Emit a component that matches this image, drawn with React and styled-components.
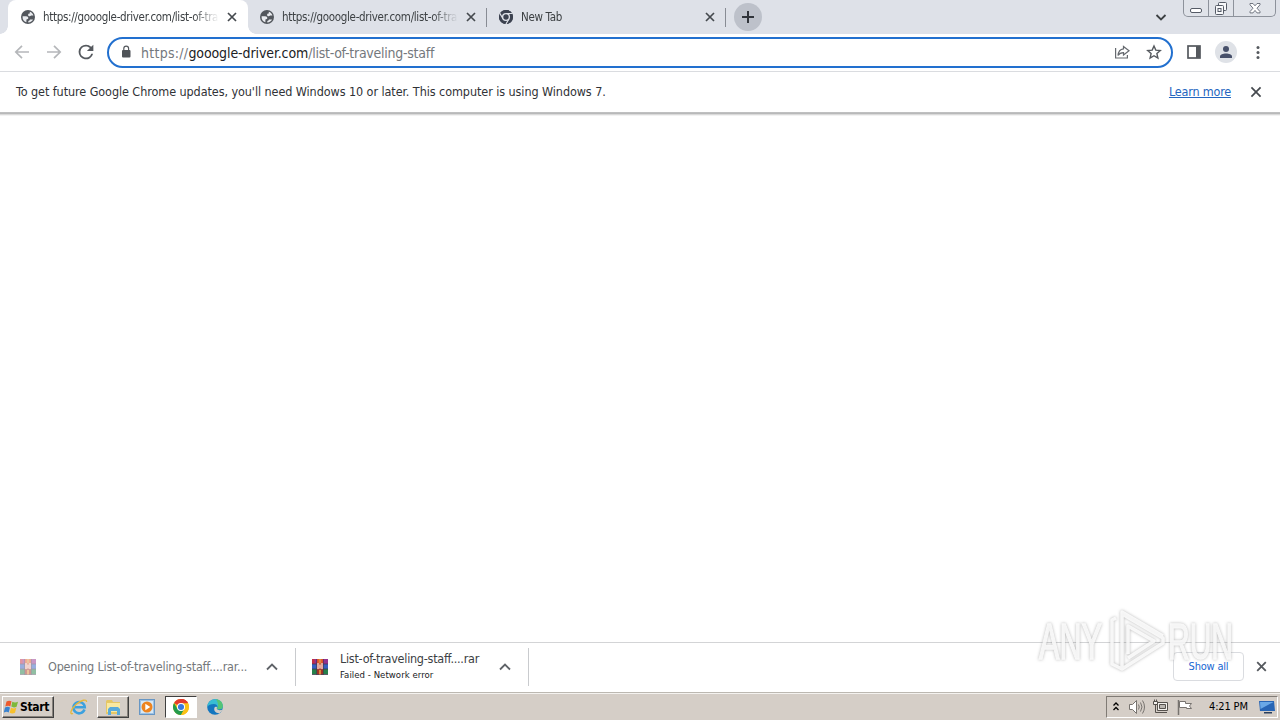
import styled, { createGlobalStyle, css } from "styled-components";

const GlobalStyle = createGlobalStyle`
    * {
        box-sizing: border-box;
    }

    body {
        margin: 0;
        overflow: hidden;
        font-family: "DejaVu Sans Condensed", "DejaVu Sans", sans-serif;
        font-stretch: condensed;
        background: #ffffff;
    }

    svg {
        display: block;
        flex: none;
    }
`

const Screen = styled.div`
    position: relative;
    width: 1280px;
    height: 720px;
    display: flex;
    flex-direction: column;
    overflow: hidden;
    background: #ffffff;
`

const Text = styled.span`
    display: block;
    flex: none;
    white-space: pre;
    font-size: ${p => p.$size || 12}px;
    line-height: 16px;
    letter-spacing: ${p => p.$spacing || 0}px;
    color: ${p => p.$color || "#3c4043"};
`

const TabStrip = styled.div`
    height: 34px;
    flex: none;
    display: flex;
    padding-left: 8px;
    background: #dee1e8;
`

const TabItem = styled.div`
    position: relative;
    width: ${p => p.$width}px;
    height: 34px;
    display: flex;
    align-items: center;
    padding-left: ${p => p.$active ? 13 : 12}px;

    .title {
        width: 180px;
        margin-left: 8px;
        overflow: hidden;
        mask-image: linear-gradient(to right, #000 150px, transparent 176px);
    }

    .close {
        margin-left: 2px;
    }

    ${p => p.$active && css`
        background: #ffffff;
        border-radius: 8px 8px 0 0;
        z-index: 1;

        &::before, &::after {
            content: "";
            position: absolute;
            bottom: 0;
            width: 8px;
            height: 8px;
        }
        &::before {
            left: -8px;
            background: radial-gradient(circle at 0 0, transparent 7.5px, #ffffff 8px);
        }
        &::after {
            right: -8px;
            background: radial-gradient(circle at 100% 0, transparent 7.5px, #ffffff 8px);
        }
    `}
    ${p => p.$divided && css`
        &::after {
            content: "";
            position: absolute;
            right: 0;
            top: 8px;
            width: 1px;
            height: 19px;
            background: #888c94;
        }
    `}
`

const NewTabButton = styled.div`
    width: 28px;
    height: 28px;
    margin: 3px 0 0 8px;
    border-radius: 50%;
    background: #bdc1ca;
`

const StripEnd = styled.div`
    margin-left: auto;
    display: flex;
    padding-right: 4px;

    .search {
        margin: 10px 15px 0 0;
    }
`

const WindowControls = styled.div`
    display: flex;
    height: 17px;
    border: 1px solid #8d929b;
    border-top: none;
    border-radius: 0 0 5px 5px;
    background: #e0e3e9;
`

const WindowButton = styled.div`
    width: ${p => p.$width}px;
    display: flex;
    justify-content: center;

    & + & {
        border-left: 1px solid #8d929b;
    }
`

const Toolbar = styled.div`
    height: 38px;
    flex: none;
    display: flex;
    align-items: center;
    padding: 0 14px 1px 14px;
    border-bottom: 1px solid #dadce0;
    background: #ffffff;

    .nav {
        display: flex;
        gap: 16px;
    }
`

const Omnibox = styled.div`
    width: 1066px;
    height: 31px;
    margin: 0 13px;
    padding: 0 9px 0 11px;
    display: flex;
    align-items: center;
    border: 2px solid #2270cf;
    border-radius: 16px;

    .url {
        display: flex;
        margin-left: 9px;
        margin-right: auto;
        padding-top: 1px;
    }

    .share {
        margin-right: 16px;
    }
`

const ToolbarActions = styled.div`
    display: flex;
    align-items: center;
    gap: 13px;
`

const Avatar = styled.div`
    width: 22px;
    height: 22px;
    border-radius: 50%;
    background: #dfe2e7;
    display: flex;
    align-items: center;
    justify-content: center;
`

const InfoBar = styled.div`
    height: 44px;
    flex: none;
    display: flex;
    align-items: center;
    padding: 0 16px 4px 16px;
    background: linear-gradient(to bottom, #ffffff 40px, #d5d5d5 40px, #a9aaab 41px, #c8c8c8 42px, #ececec 43px, #f8f8f8 44px);

    .link {
        margin-left: auto;
        margin-right: 17px;
        text-decoration: underline;
    }
`

const Page = styled.main`
    flex: 1;
    background: #ffffff;
`

const DownloadShelf = styled.div`
    height: 50px;
    flex: none;
    display: flex;
    align-items: center;
    border-top: 1px solid #d3d4d6;
    background: #ffffff;
    padding: 0 11px 2px 0;
`

const DownloadItem = styled.div`
    width: ${p => p.$width}px;
    height: 38px;
    display: flex;
    align-items: center;
    padding-left: ${p => p.$pad}px;
    border-right: 1px solid #c9cbce;

    .archive {
        opacity: ${p => p.$faded ? 0.5 : 1};
    }

    .info {
        width: ${p => p.$info}px;
        margin-left: 12px;
    }

    .chevron {
        margin-left: 11px;
    }
`

const ShowAllButton = styled.div`
    width: 71px;
    height: 29px;
    margin: 0 10px 0 auto;
    display: flex;
    align-items: center;
    justify-content: center;
    border: 1px solid #dadce0;
    border-radius: 4px;
`

const Taskbar = styled.div`
    height: 28px;
    flex: none;
    display: flex;
    align-items: center;
    padding: 2px 2px 2px;
    border-top: 1px solid #bcb8b1;
    box-shadow: inset 0 1px 0 #f4f2ef;
    background: #d5cec7;
`

const StartButton = styled.div`
    width: 52px;
    height: 22px;
    display: flex;
    align-items: center;
    padding-left: 1px;
    border: 1px solid;
    border-color: #ffffff #404040 #404040 #ffffff;
    box-shadow: inset -1px -1px 0 #87827c;

    span {
        font: bold 12px/18px "DejaVu Sans Condensed", sans-serif;
        letter-spacing: -0.3px;
        color: #000000;
    }
`

const TaskButton = styled.div`
    width: 32px;
    height: 22px;
    margin-right: 2px;
    display: flex;
    align-items: center;
    justify-content: center;

    ${p => p.$first && css`
        margin-left: 9px;
    `}
    ${p => p.$raised && css`
        border: 1px solid;
        border-color: #ffffff #404040 #404040 #ffffff;
        box-shadow: inset -1px -1px 0 #87827c;
    `}
    ${p => p.$pressed && css`
        border: 1px solid;
        border-color: #404040 #ffffff #ffffff #404040;
        background: #ffffff;
    `}
`

const Tray = styled.div`
    width: 172px;
    height: 22px;
    margin-left: auto;
    display: flex;
    align-items: center;
    padding-left: 4px;
    border: 1px solid;
    border-color: #807b75 #ffffff #ffffff #807b75;

    .status {
        display: flex;
        gap: 6px;
        margin-left: 7px;
    }

    .clock {
        margin: 0 11px 0 15px;
    }
`

const Watermark = styled.div`
    position: absolute;
    left: 1030px;
    top: 602px;
    z-index: 5;
    filter: drop-shadow(0 0 1.5px rgba(90, 90, 90, 0.5));
`

const CloseIcon = ({ size = 14, color = "#45494e", width = 1.7, className }) => (
    <svg className={className} width={size} height={size} viewBox="0 0 14 14" stroke={color} strokeWidth={width}>
        <path d="M3 3l8 8M11 3l-8 8" />
    </svg>
)

const GlobeIcon = () => (
    <svg width="14" height="14" viewBox="0 0 14 14">
        <circle cx="7" cy="7" r="7" fill="#53575d" />
        <path d="M1.600 6.200h3.500c1.500 0 2.200.7 2.200 1.900 0 1-.8 1.300-1.900 1.300v2.900C3 11.600 1.200 9.500 1.600 6.200z" fill="#e9ebef" />
        <path d="M12.400 5.500h-2.300c-.8 1.100-3 .9-3-.5 0-1.100.6-1.500 1.700-1.500V1.700c1.900.6 3.200 2 3.600 3.800z" fill="#e9ebef" />
        <path d="M7.300 12.500v-1.600c1 0 1.600-.5 1.600-1.400h3.100c-.8 1.700-2.500 2.900-4.700 3z" fill="#e9ebef" />
    </svg>
)

const ChromeMark = ({ size, colors, center, gap }) => (
    <svg width={size} height={size} viewBox="0 0 24 24">
        <circle cx="12" cy="12" r="12" fill={colors[2]} />
        <path d="M12 12L1.600 6A12 12 0 0 1 22.400 6z" fill={colors[0]} />
        <path d="M12 12V0A12 12 0 0 1 22.400 6z" fill={colors[0]} />
        <path d="M1.600 6A12 12 0 0 0 12 24l5.200-9L12 12 6.800 15z" fill={colors[1]} />
        <path d="M12 6.500h10.700A12 12 0 0 1 12 24l5-9z" fill={colors[2]} />
        {gap && <path d="M12 6h11M6.800 15L1.500 5.800M17.200 15L12 24" stroke={gap} strokeWidth="2" />}
        <circle cx="12" cy="12" r={gap ? 7 : 6} fill={gap || "#ffffff"} />
        <circle cx="12" cy="12" r="4.600" fill={center} />
    </svg>
)

const ArchiveIcon = () => (
    <svg className="archive" width="16" height="16" viewBox="0 0 16 16">
        <path fill="#94318f" d="M0 0h16v5H0z" />
        <path fill="#c22d45" d="M0 0h2.500v5H0z" />
        <path fill="#355fc0" d="M0 5h16v5H0z" />
        <path fill="#25804a" d="M0 10h16v5.500H0z" />
        <path fill="#ea5a2a" d="M5 0h6v5H5z" />
        <path fill="#a83224" d="M5 10h6v5.500H5z" />
        <path d="M0 5h16M0 10h16M0 15.500h16M4.700 0v16M11.300 0v16" stroke="#43304a" strokeWidth=".7" />
        <path fill="#d98a3c" d="M7 0h2v5H7zM7 11h2v4.500H7z" />
        <path d="M5 4.500h6v6H5z" fill="#c24d3a" />
        <path d="M6 4v6M10 4v6M8 5.500v4" stroke="#fff4ef" strokeWidth="1.100" fill="none" />
    </svg>
)

const Chevron = ({ className, down }) => (
    <svg className={className} width="14" height="14" viewBox="0 0 14 14" fill="none" stroke={down ? "#3c4043" : "#5f6368"} strokeWidth="1.800">
        <path d={down ? "M2.500 5L7 9.500 11.500 5" : "M2 9.500l5-5 5 5"} />
    </svg>
)

const ArrowIcon = ({ flip }) => (
    <svg width="16" height="16" viewBox="0 0 16 16" fill="none" stroke="#b5b7ba" strokeWidth="1.700">
        <path d={flip ? "M1 8h13M8 1.800L14.200 8 8 14.200" : "M15 8H2M8 1.800L1.800 8 8 14.200"} />
    </svg>
)

const Tab = ({ title, width, active, divided, chrome }) => (
    <TabItem $width={width} $active={active} $divided={divided}>
        {chrome ? <ChromeMark size={14} colors={["#3c4250", "#3c4250", "#3c4250"]} center="#3c4250" gap="#dee1e8" /> : <GlobeIcon />}
        <Text className="title" $size={11.5} $spacing={-0.32}>{title}</Text>
        <CloseIcon className="close" />
    </TabItem>
)

const App = () => {
    return (
        <Screen>
            <GlobalStyle />
            <TabStrip>
                <Tab title="https://gooogle-driver.com/list-of-traveling-staff" width={240} active />
                <Tab title="https://gooogle-driver.com/list-of-traveling-staff" width={239} divided />
                <Tab title="New Tab" width={239} divided chrome />
                <NewTabButton>
                    <svg width="28" height="28" viewBox="0 0 28 28" stroke="#30343a" strokeWidth="2">
                        <path d="M14 8v12M8 14h12" />
                    </svg>
                </NewTabButton>
                <StripEnd>
                    <Chevron className="search" down />
                    <WindowControls>
                        <WindowButton $width={24}>
                            <svg width="14" height="16" viewBox="0 0 14 16" fill="#fff" stroke="#555b66">
                                <rect x="1.500" y="8.500" width="11" height="4" rx="1.500" />
                            </svg>
                        </WindowButton>
                        <WindowButton $width={25}>
                            <svg width="14" height="16" viewBox="0 0 14 16" fill="#f7f8fa" stroke="#555b66">
                                <rect x="4.500" y="2.500" width="8" height="8" rx="1" />
                                <rect x="1.500" y="5.500" width="8" height="9" rx="1" />
                                <rect x="4" y="8.500" width="3" height="3" />
                            </svg>
                        </WindowButton>
                        <WindowButton $width={42}>
                            <svg width="14" height="16" viewBox="0 0 14 16" fill="#fff" stroke="#636975" strokeWidth=".9">
                                <path d="M2 3.500h3l2 2.300 2-2.300h3v1.300L9 8.200l3 3.400v1.300H9l-2-2.500-2 2.500H2v-1.300l3-3.400-3-3.400z" />
                            </svg>
                        </WindowButton>
                    </WindowControls>
                </StripEnd>
            </TabStrip>

            <Toolbar>
                <div className="nav">
                    <ArrowIcon />
                    <ArrowIcon flip />
                    <svg width="16" height="16" viewBox="3.300 3.300 17.400 17.400" fill="#55595e">
                        <path d="M17.650 6.350A7.960 7.960 0 0 0 12 4a8 8 0 1 0 7.730 10h-2.080A6 6 0 1 1 12 6c1.660 0 3.140.690 4.220 1.780L13 11h7V4l-2.350 2.350z" />
                    </svg>
                </div>
                <Omnibox>
                    <svg width="12" height="14" viewBox="0 0 12 14">
                        <path d="M3.800 6V3.600a2.400 2.400 0 0 1 4.800 0V6" fill="none" stroke="#55595e" strokeWidth="1.200" />
                        <rect x="2" y="5" width="8.500" height="7.500" rx="1" fill="#4f5358" />
                    </svg>
                    <div className="url">
                        <Text $size={14} $spacing={0.28} $color="#74787d">https://</Text>
                        <Text $size={14} $spacing={-0.1} $color="#202124">gooogle-driver.com</Text>
                        <Text $size={14} $spacing={-0.26} $color="#74787d">/list-of-traveling-staff</Text>
                    </div>
                    <svg className="share" width="16" height="16" viewBox="0 0 16 16" fill="none" stroke="#666a6f" strokeWidth="1.200">
                        <path d="M1.600 4v10h11.800v-3" />
                        <path d="M9.500 2.500L15 6.800 9.500 11V8.700C7 8.700 5.300 9.500 4 11.500 4.300 8 6 5.200 9.500 4.800z" />
                    </svg>
                    <svg width="16" height="16" viewBox="0 0 16 16" fill="none" stroke="#55595e" strokeWidth="1.400">
                        <path d="M8 2l1.800 4.100 4.500.4-3.400 3.100 1 4.400L8 11.700 4.100 14l1-4.400-3.400-3.100 4.500-.4z" />
                    </svg>
                </Omnibox>
                <ToolbarActions>
                    <svg width="16" height="16" viewBox="0 0 16 16">
                        <rect x="2" y="2" width="12" height="12" fill="none" stroke="#55595e" strokeWidth="1.700" />
                        <path d="M10 2h4v12h-4z" fill="#55595e" />
                    </svg>
                    <Avatar>
                        <svg width="14" height="14" viewBox="0 0 14 14" fill="#47506a">
                            <circle cx="7" cy="4" r="3" />
                            <path d="M1 13v-1.500c0-2 3-3 6-3s6 1 6 3V13z" />
                        </svg>
                    </Avatar>
                    <svg width="16" height="16" viewBox="0 0 16 16" fill="#55595e">
                        <circle cx="8" cy="3.500" r="1.500" />
                        <circle cx="8" cy="8.500" r="1.500" />
                        <circle cx="8" cy="13.500" r="1.500" />
                    </svg>
                </ToolbarActions>
            </Toolbar>

            <InfoBar>
                <Text $size={12.5} $spacing={-0.075} $color="#303236">To get future Google Chrome updates, you'll need Windows 10 or later. This computer is using Windows 7.</Text>
                <Text className="link" $size={12.5} $spacing={-0.2} $color="#2465c0">Learn more</Text>
                <CloseIcon width={1.500} color="#45494e" size={16} />
            </InfoBar>

            <Page />

            <DownloadShelf>
                <DownloadItem $width={296} $pad={20} $faded $info={206}>
                    <ArchiveIcon />
                    <div className="info">
                        <Text $size={12.5} $spacing={-0.2} $color="#74777b">Opening List-of-traveling-staff....rar...</Text>
                    </div>
                    <Chevron className="chevron" />
                </DownloadItem>
                <DownloadItem $width={233} $pad={16} $info={147}>
                    <ArchiveIcon />
                    <div className="info">
                        <Text $size={12.5} $spacing={-0.26}>List-of-traveling-staff....rar</Text>
                        <Text $size={9.5} $spacing={0.05} $color="#202124">Failed - Network error</Text>
                    </div>
                    <Chevron className="chevron" />
                </DownloadItem>
                <ShowAllButton>
                    <Text $size={11} $spacing={-0.2} $color="#1967d2">Show all</Text>
                </ShowAllButton>
                <CloseIcon width={1.700} color="#55595e" size={15} />
            </DownloadShelf>

            <Taskbar>
                <StartButton>
                    <svg width="16" height="16" viewBox="0 0 16 16">
                        <path d="M2.500 2.500c2-1.200 3.500-1 5-.2L6.300 7.400c-1.600-.9-3-.9-5 .2z" fill="#ee5a2c" />
                        <path d="M8.300 2.700c2 1 3.500 1 5.700 0l-1.400 5c-2 1-3.500.9-5.300-.1z" fill="#7db83a" />
                        <path d="M1 8.500c2-1.200 3.500-1 5-.1l-1.300 5c-1.500-.9-3-1-5 .2z" fill="#3a83cf" />
                        <path d="M7 8.700c2 1 3.300 1 5.300.1l-1.300 5c-2 1-3.600.9-5.300 0z" fill="#f7c02c" />
                    </svg>
                    <span>Start</span>
                </StartButton>
                <TaskButton $first>
                    <svg width="18" height="18" viewBox="0 0 18 18" fill="none">
                        <path d="M14.500 11.500a5.700 5.700 0 1 1 .3-2.200H5" stroke="#3ca1df" strokeWidth="2.500" />
                        <path d="M3 15.500C-1 17 1 11 6 6.500S17 .5 16.500 4" stroke="#e6b83b" strokeWidth="1.300" />
                    </svg>
                </TaskButton>
                <TaskButton $raised>
                    <svg width="18" height="18" viewBox="0 0 18 18">
                        <path d="M2 3l1-1h5l1 2h7v12H2z" fill="#e5c765" />
                        <path d="M3 5h13v9H3z" fill="#f9e9a0" />
                        <path d="M4 17v-6l2-2h8l2 2v6h-3v-4H7v4z" fill="#58aada" />
                    </svg>
                </TaskButton>
                <TaskButton>
                    <svg width="16" height="16" viewBox="0 0 16 16">
                        <rect x=".5" y=".5" width="15" height="15" fill="#9dc2e5" stroke="#6796c4" />
                        <rect x="2" y="2" width="12" height="12" fill="#d7e8f5" />
                        <circle cx="8" cy="8" r="5.500" fill="#ed8420" />
                        <path d="M6.300 4.700v6.600L11.300 8z" fill="#fff" />
                    </svg>
                </TaskButton>
                <TaskButton $pressed>
                    <ChromeMark size={16} colors={["#e33b2e", "#249b4d", "#fbc116"]} center="#3979df" />
                </TaskButton>
                <TaskButton>
                    <svg width="16" height="16" viewBox="0 0 16 16">
                        <circle cx="8" cy="8" r="7.800" fill="#1476bf" />
                        <path d="M.3 8C.6-2.500 16-2.300 15.800 7.500c-.2 3.200-4.600 3.500-5.900 2 1.800-2.500-.5-4.500-3-4.500C4 5 1 6 .3 8z" fill="#38bdd3" />
                        <path d="M9 .3c5 .5 7 4 6.800 7.200-.2 3.200-4.600 3.500-5.900 2 2.600-3 .5-6.700-.9-9.200z" fill="#55c476" />
                        <path d="M9.700 9.600c1 2 4 2 5.800.8-.6 1.600-1.500 2.800-2.700 3.700C9 14.500 6.300 12 7.500 8.500c.5-1 2-.8 2.500-.3z" fill="#d5cec7" />
                    </svg>
                </TaskButton>
                <Tray>
                    <svg width="10" height="12" viewBox="0 0 10 12" fill="none" stroke="#000" strokeWidth="1.300">
                        <path d="M2.500 4.500L5 2l2.500 2.500M2.500 9L5 6.500 7.500 9" />
                    </svg>
                    <div className="status">
                        <svg width="18" height="18" viewBox="0 0 18 18" fill="#fff" stroke="#77736f">
                            <path d="M1.500 6.500h3l4-4v13l-4-4h-3z" />
                            <path d="M10.500 6.500q1.500 2.500 0 5M12.500 4.500q3 4.500 0 9M14.500 2.500q4 6.500 0 13" fill="none" />
                        </svg>
                        <svg width="18" height="18" viewBox="0 0 18 18" fill="#f3f1ee" stroke="#55514d">
                            <path d="M5.500 4.500h10v8h-10z" />
                            <path d="M7.500 6.500h6v4h-6z" fill="#bab6b1" />
                            <path d="M7 14.500h8M3.500 6.500v8h4" fill="none" />
                            <path d="M1.500 3.500h4v3h-4zM2.500 1.500v2M4.500 1.500v2" />
                        </svg>
                        <svg width="18" height="18" viewBox="0 0 18 18" fill="#fff" stroke="#77736f">
                            <path d="M2.500 2v15" strokeWidth="1.500" />
                            <path d="M3.500 3.500h6v2h6l-2 2.500 2 2.500h-5v-1h-7z" />
                        </svg>
                    </div>
                    <Text className="clock" $size={11} $spacing={-0.15} $color="#000000">4:21 PM</Text>
                    <svg width="16" height="16" viewBox="0 0 16 16">
                        <path d="M0 2h15l1 10H1z" fill="#2765b5" />
                        <path d="M1 3h13.500L1.500 10z" fill="#69a8e7" />
                        <path d="M5 13h8v1.500H5z" fill="#293f5e" />
                    </svg>
                </Tray>
            </Taskbar>

            <Watermark>
                <svg width="210" height="76" viewBox="0 0 210 76" opacity=".85">
                    <g fontFamily="Liberation Sans" fontSize="50" fill="#ffffff" stroke="#ffffff" strokeWidth="1.400">
                        <text x="9" y="57" textLength="63" lengthAdjust="spacingAndGlyphs">ANY</text>
                        <text x="138" y="57" textLength="65" lengthAdjust="spacingAndGlyphs">RUN</text>
                    </g>
                    <g fill="none" stroke="#ffffff" strokeWidth="3.500" strokeLinejoin="round">
                        <path d="M86 16l-4 2v44l10 5V10l41 24M92 67l41-26v-5L92 12M98 52V24l26 15-26 17" />
                    </g>
                </svg>
            </Watermark>
        </Screen>
    );
}

export default App;
